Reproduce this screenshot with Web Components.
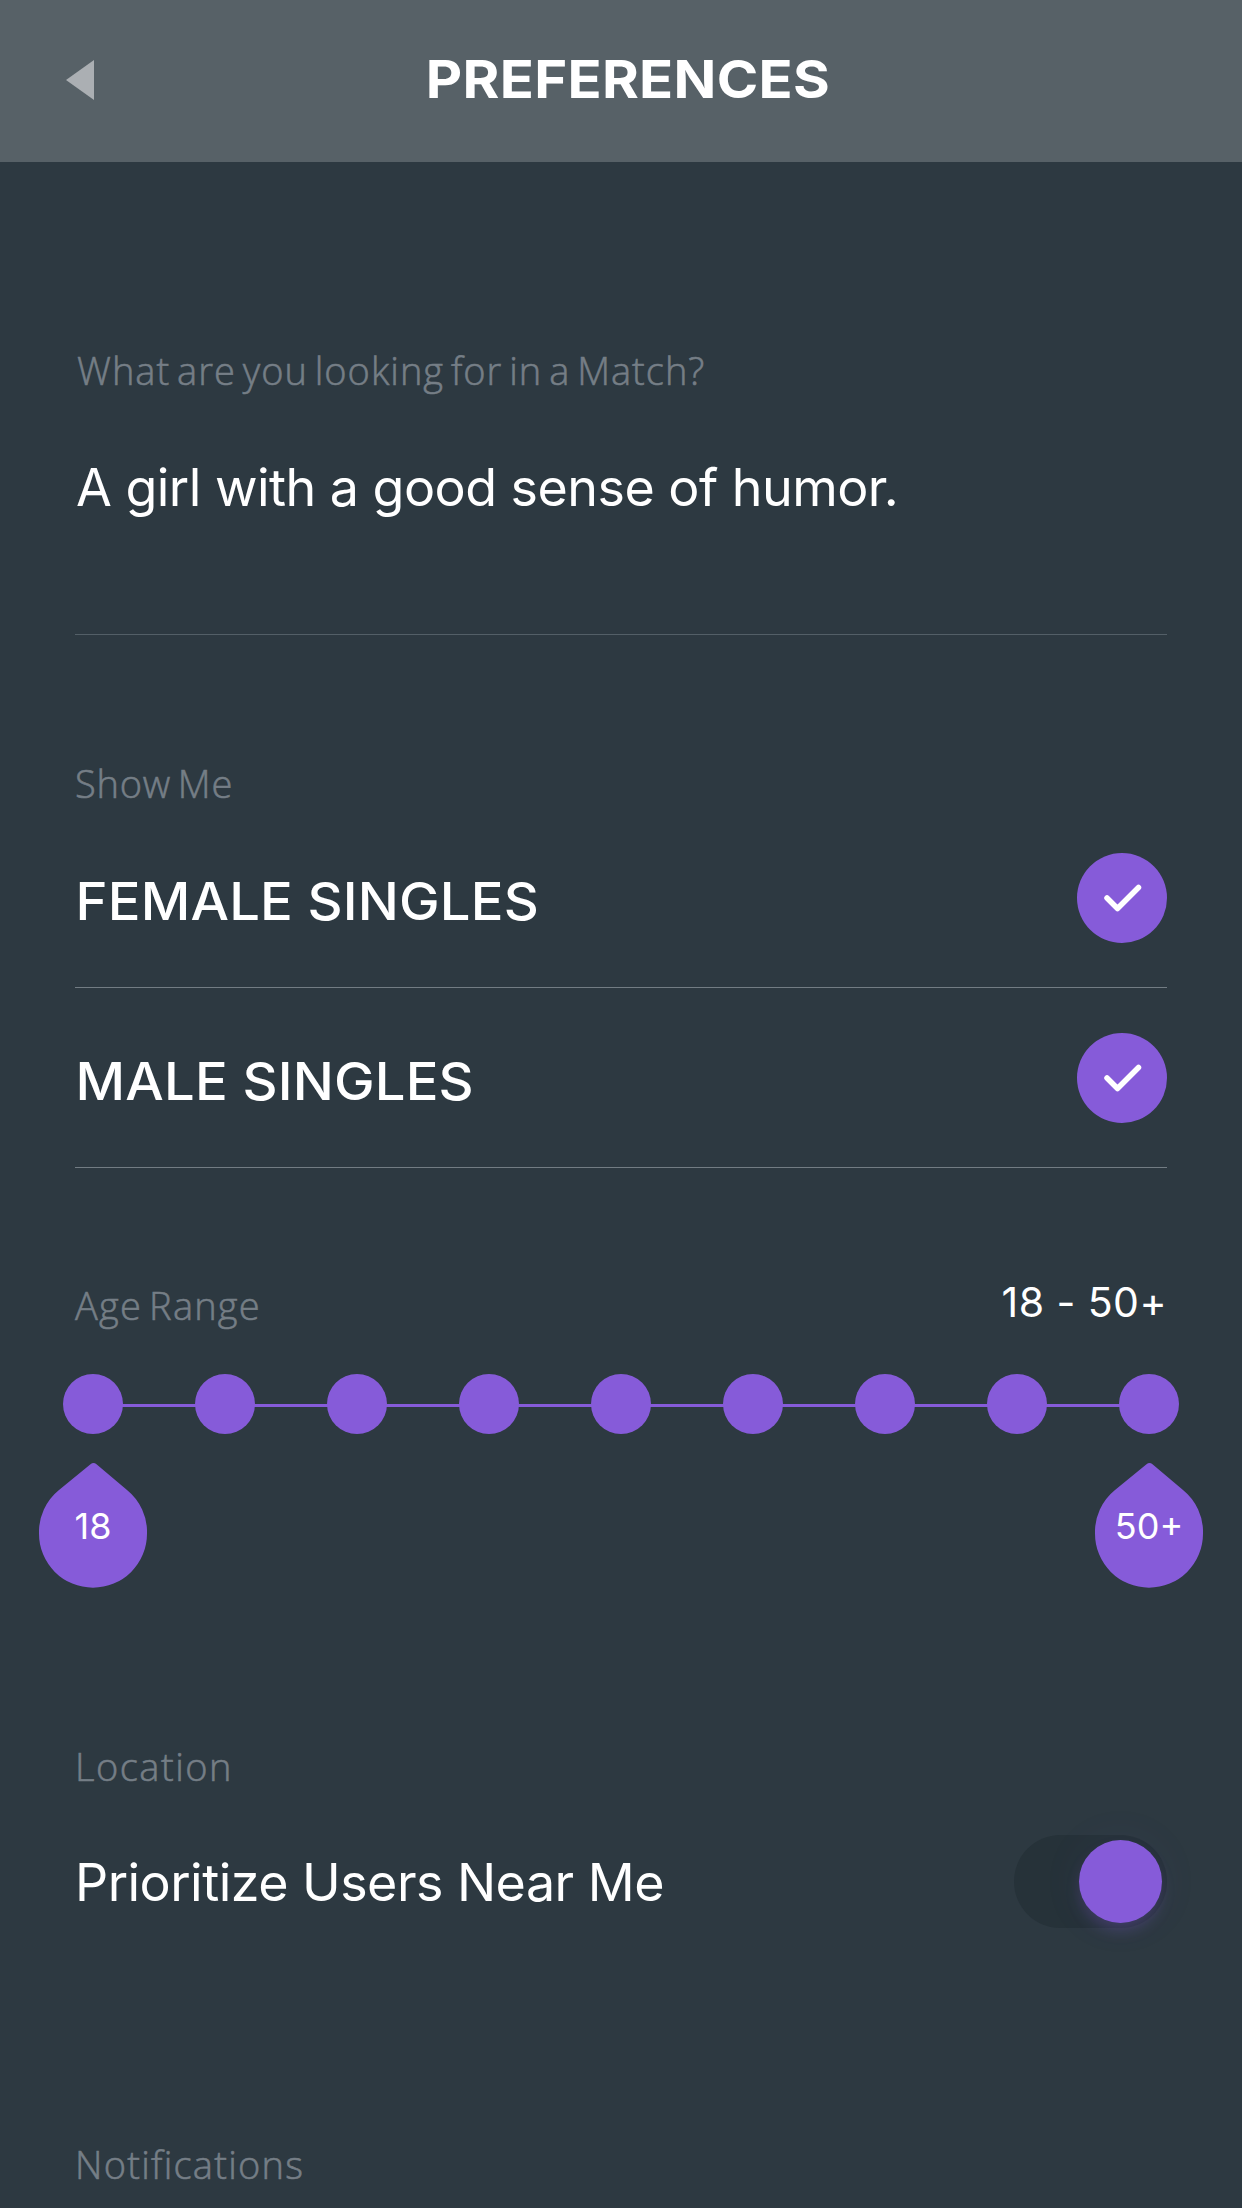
<!DOCTYPE html>
<html lang="en"><head><meta charset="utf-8"><title>Preferences</title>
<style>
html,body{margin:0;height:2208px;overflow:hidden;background:#2d3941}
body{font-family:Inter,"Liberation Sans",sans-serif;color:#fff}
</style></head><body>
<preferences-page></preferences-page>
<script>
const define=(name,html,init)=>customElements.define(name,class extends HTMLElement{
  constructor(){super();this.attachShadow({mode:'open'}).innerHTML=html;}
  connectedCallback(){if(init)init.call(this,this.shadowRoot);}
});

define('nav-header',`<style>
:host{display:grid;grid-template-columns:94px 1fr 94px;align-items:center;height:162px;box-sizing:border-box;padding-bottom:2px;background:#576167}
svg{display:block;justify-self:end;width:28px;height:40px}
h1{margin:0;text-align:center;font-size:52.5px;font-weight:750;line-height:64px;padding:0 0 2px 13px;letter-spacing:.3px;transform:scaleX(1.07)}
</style><svg viewBox="0 0 28 40"><path d="M28 0V40L0 20Z" fill="#abafb3"/></svg><h1><slot></slot></h1>`);

define('field-label',`<style>
:host{display:block;font:300 38px/50px "Open Sans","Noto Sans",sans-serif;color:#757e86;white-space:nowrap;letter-spacing:var(--ls,1px);word-spacing:-4px;-webkit-text-stroke:.6px #757e86}
</style><slot></slot>`);

define('body-text',`<style>
:host{display:block;font-size:52px;line-height:64px;white-space:nowrap;letter-spacing:-.53px}
</style><slot></slot>`);

define('check-row',`<style>
:host{display:flex;align-items:center;justify-content:space-between;height:179px;border-bottom:1px solid #727c83}
span{font-size:52px;font-weight:550;line-height:64px;padding:9px 0 0 .6px;letter-spacing:.15px;transform:scaleX(1.045);transform-origin:0 50%}
svg{display:block;width:90px;height:90px;padding-top:1px}
</style><span><slot></slot></span>
<svg viewBox="0 0 90 90"><circle cx="45" cy="45" r="45" fill="#865bd9"/><path d="M30 45L40.5 55.500L61.500 34.500" fill="none" stroke="#fff" stroke-width="5.500" stroke-linecap="round" stroke-linejoin="round"/></svg>`);

define('range-steps',`<style>
:host{display:flex;align-items:center;height:60px;margin:0 -12px}
b{flex:none;width:60px;height:60px;border-radius:50%;background:#865bd9}
i{flex:1;height:3px;margin:3px -1px 0;background:#865bd9}
</style>`,function(r){
  for(let n=0;n<9;n++){if(n)r.append(document.createElement('i'));r.append(document.createElement('b'));}
});

define('range-pin',`<style>
:host{display:grid;width:108px;height:125px}
svg,span{grid-area:1/1}
svg{display:block}
span{text-align:center;font-size:36px;line-height:44px;padding:41px 0 0 0}
</style><svg width="108" height="125" viewBox="0 0 108 125"><path d="M51.500 1.200Q54.500-1 57.500 1.200L88 27A54 54 0 0 1 108 70.700A54 54 0 0 1 0 70.700A54 54 0 0 1 20 27Z" fill="#865bd9"/></svg><span><slot></slot></span>`);

define('toggle-switch',`<style>
:host{display:flex;justify-content:flex-end;box-sizing:border-box;width:153px;height:93px;padding:5px;border-radius:47px;background:#263239}
b{width:83px;height:83px;border-radius:50%;background:#865bd9;box-shadow:0 9px 16px -3px rgba(134,91,217,.3),0 0 50px rgba(134,91,217,.05)}
</style><b></b>`);

define('preferences-page',`<style>
:host{display:block}
main{display:flex;flex-direction:column;padding:183px 75px 0}
.ask{padding-left:2px}
.answer{margin-top:61px;padding:0 0 114px 1px;border-bottom:1px solid #535f67}
.show{margin-top:123px;--ls:.8px}
.line{display:flex;justify-content:space-between}
.age{margin-top:112px;--ls:1.2px}
.value{font-size:41px;line-height:44px;letter-spacing:.45px}
range-steps{margin-top:44px}
.pins{display:flex;justify-content:space-between;margin:29px -36px 0}
.loc{margin-top:153px;--ls:1.5px}
.near{margin-top:44px;align-items:center}
.near body-text{padding-top:2px}
.note{margin-top:211px;--ls:1.25px}
</style>
<nav-header>PREFERENCES</nav-header>
<main>
<field-label class="ask">What are you looking for in a Match?</field-label>
<body-text class="answer">A girl with a good sense of humor.</body-text>
<field-label class="show">Show Me</field-label>
<check-row>FEMALE SINGLES</check-row>
<check-row>MALE SINGLES</check-row>
<div class="line age"><field-label>Age Range</field-label><span class="value">18 - 50+</span></div>
<range-steps></range-steps>
<div class="pins"><range-pin>18</range-pin><range-pin>50+</range-pin></div>
<field-label class="loc">Location</field-label>
<div class="line near"><body-text>Prioritize Users Near Me</body-text><toggle-switch></toggle-switch></div>
<field-label class="note">Notifications</field-label>
</main>`);
</script></body></html>
